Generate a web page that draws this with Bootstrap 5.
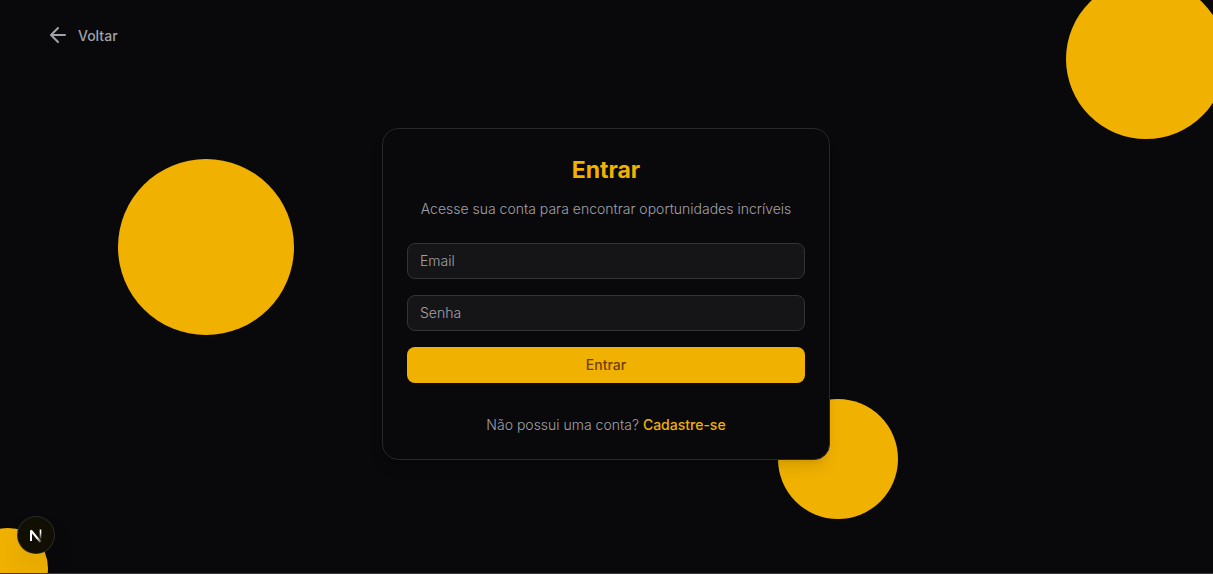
<!DOCTYPE html>
<html lang="pt-BR" data-bs-theme="dark">
<head>
<meta charset="utf-8">
<meta name="viewport" content="width=device-width, initial-scale=1">
<title>Entrar</title>
<link href="https://cdn.jsdelivr.net/npm/bootstrap@5.3.0/dist/css/bootstrap.min.css" rel="stylesheet">
<style>
  body { font-family: Inter, "Liberation Sans", sans-serif; font-size: 14px; font-weight: 350; line-height: 20px; background: #09090b; color: #a1a1aa; }
  .page { border-bottom: 1px solid #3a3a3d; }
  .page-header { padding: 24px 48px; }
  .page-main { padding: 0 17px 58px 16px; }
  .back-link { color: #a1a1aa; gap: 10px; line-height: 24px; }
  .disc { background: #f0b100; }
  .disc-left { width: 176px; height: 176px; left: 118px; top: 159px; }
  .disc-top { width: 160px; height: 160px; right: -13px; top: -21px; }
  .disc-card { width: 120px; height: 120px; right: -68px; bottom: -59px; }
  .disc-corner { width: 80px; height: 80px; left: -32px; bottom: -35px; }
  .login-wrap { max-width: 448px; }
  .login-card { background: #09090b; border: 1px solid #27272a; border-radius: 16px; padding: 24px; box-shadow: 0 10px 15px -3px rgba(0,0,0,.1), 0 4px 6px -4px rgba(0,0,0,.1); }
  .login-title { color: #f0b100; font-size: 23px; line-height: 34px; margin-bottom: 12px; }
  .login-card .form-control { height: 36px; padding: 4px 12px; font-size: 14px; font-weight: inherit; background: #151517; border: 1px solid #343437; border-radius: 8px; }
  .login-card .form-control::placeholder { color: #a1a1aa; opacity: 1; }
  .btn-login { --bs-btn-bg: #f0b100; --bs-btn-color: #733e0a; --bs-btn-hover-bg: #d9a000; --bs-btn-hover-color: #733e0a; height: 36px; padding: 0; font-size: 14px; border: 0; border-radius: 8px; }
  .signup { margin-top: 32px; }
  .signup a { color: #f0b100; }
  .dev-badge { left: 18px; bottom: 20px; width: 36px; height: 36px; background: #110e03; box-shadow: 0 0 0 1px #2c2b27, 0 16px 32px -8px rgba(0,0,0,.24); }
</style>
</head>
<body>
<div class="page position-relative overflow-hidden min-vh-100 d-flex flex-column">
  <div class="disc disc-left rounded-circle position-absolute"></div>
  <div class="disc disc-top rounded-circle position-absolute"></div>
  <div class="disc disc-corner rounded-circle position-absolute"></div>

  <header class="page-header d-flex position-relative">
    <a href="#" class="back-link d-inline-flex align-items-center text-decoration-none fw-medium">
      <svg width="20" height="20" viewBox="0 0 20 20" fill="none" stroke="currentColor" stroke-width="2" stroke-linecap="round" stroke-linejoin="round" aria-hidden="true"><path d="M17 9H3M10 2 3 9l7 7"/></svg>
      Voltar
    </a>
  </header>

  <main class="page-main flex-grow-1 d-flex align-items-center justify-content-center">
    <div class="login-wrap position-relative w-100">
      <div class="disc disc-card rounded-circle position-absolute"></div>
      <section class="login-card position-relative text-center">
        <h1 class="login-title fw-bold">Entrar</h1>
        <p class="mb-4">Acesse sua conta para encontrar oportunidades incríveis</p>
        <form class="d-flex flex-column gap-3">
          <input type="email" id="email" class="form-control" placeholder="Email" aria-label="Email">
          <input type="password" id="senha" class="form-control" placeholder="Senha" aria-label="Senha">
          <button type="submit" class="btn btn-login fw-medium w-100">Entrar</button>
        </form>
        <p class="signup mb-0">Não possui uma conta? <a href="#" class="text-decoration-none fw-medium">Cadastre-se</a></p>
      </section>
    </div>
  </main>

  <button type="button" class="dev-badge btn p-0 border-0 rounded-circle position-absolute d-flex align-items-center justify-content-center" aria-label="Next.js">
    <svg width="36" height="36" viewBox="0 0 36 36" fill="none" aria-hidden="true">
      <defs>
        <linearGradient id="stem" x1="0" y1="12" x2="0" y2="24" gradientUnits="userSpaceOnUse"><stop offset="0.3" stop-color="#fff"/><stop offset="0.9" stop-color="#fff" stop-opacity="0"/></linearGradient>
        <linearGradient id="diag" x1="20" y1="20" x2="24" y2="25" gradientUnits="userSpaceOnUse"><stop stop-color="#fff"/><stop offset="1" stop-color="#fff" stop-opacity="0.2"/></linearGradient>
      </defs>
      <path d="M13 24V13.500L22.500 25" stroke="url(#diag)" stroke-width="2" stroke-linejoin="bevel"/>
      <path d="M22.500 12.500V23" stroke="url(#stem)" stroke-width="1.600"/>
    </svg>
  </button>
</div>
<script src="https://cdn.jsdelivr.net/npm/bootstrap@5.3.0/dist/js/bootstrap.bundle.min.js"></script>
</body>
</html>
